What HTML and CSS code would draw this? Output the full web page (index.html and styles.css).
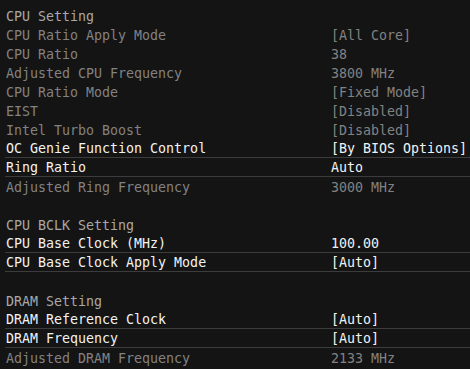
FILE: index.html
```html
<!DOCTYPE html>
<html>
<head>
<meta charset="utf-8">
<link rel="stylesheet" href="styles.css">
</head>
<body>
<div class="panel">
  <div class="row head"><span>CPU Setting</span><span></span></div>
  <div class="row dim"><span>CPU Ratio Apply Mode</span><span class="val">[All Core]</span></div>
  <div class="row dim"><span>CPU Ratio</span><span class="val">38</span></div>
  <div class="row dim"><span>Adjusted CPU Frequency</span><span class="val">3800 MHz</span></div>
  <div class="row dim"><span>CPU Ratio Mode</span><span class="val">[Fixed Mode]</span></div>
  <div class="row dim"><span>EIST</span><span class="val">[Disabled]</span></div>
  <div class="row dim"><span>Intel Turbo Boost</span><span class="val">[Disabled]</span></div>
  <div class="row sel"><span>OC Genie Function Control</span><span class="val">[By BIOS Options]</span></div>
  <div class="row sel"><span>Ring Ratio</span><span class="val">Auto</span></div>
  <div class="row dim"><span>Adjusted Ring Frequency</span><span class="val">3000 MHz</span></div>
  <div class="row blank"></div>
  <div class="row head"><span>CPU BCLK Setting</span><span></span></div>
  <div class="row sel"><span>CPU Base Clock (MHz)</span><span class="val">100.00</span></div>
  <div class="row sel"><span>CPU Base Clock Apply Mode</span><span class="val">[Auto]</span></div>
  <div class="row blank"></div>
  <div class="row head"><span>DRAM Setting</span><span></span></div>
  <div class="row sel"><span>DRAM Reference Clock</span><span class="val">[Auto]</span></div>
  <div class="row sel"><span>DRAM Frequency</span><span class="val">[Auto]</span></div>
  <div class="row dim"><span>Adjusted DRAM Frequency</span><span class="val">2133 MHz</span></div>
</div>
</body>
</html>
```
FILE: styles.css
```css
html, body {
  margin: 0;
  padding: 0;
  background: #141414;
}
body {
  width: 470px;
  height: 369px;
  overflow: hidden;
}
.panel {
  padding-top: 6px;
  margin-left: 5px;
  font-family: "DejaVu Sans Mono", monospace;
  font-size: 13.3px;
}
.row {
  box-sizing: border-box;
  height: 19px;
  line-height: 19px;
  padding-left: 1px;
  padding-top: 1px;
  display: grid;
  grid-template-columns: 325px 1fr;
  white-space: pre;
}
.head {
  color: #a8a8a8;
}
.dim {
  color: #828282;
}
.sel {
  color: #f2f2f2;
  border-bottom: 1px solid #3c3c3c;
  line-height: 18px;
}
```
